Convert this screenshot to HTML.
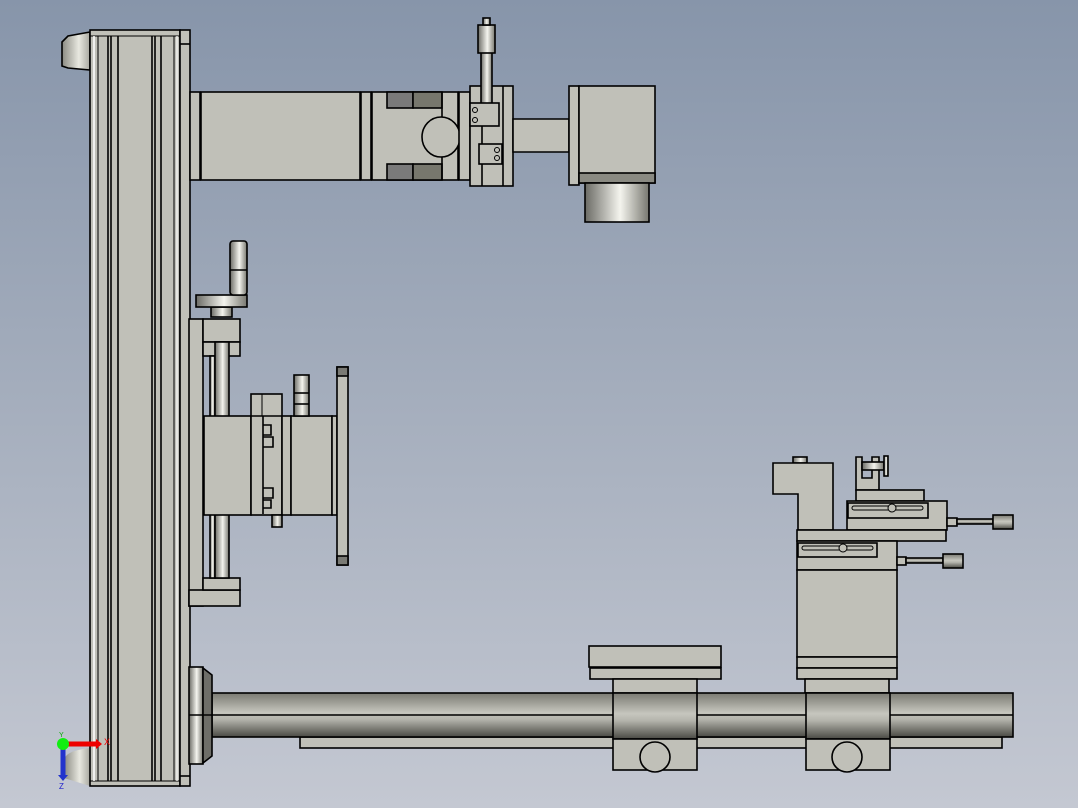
<!DOCTYPE html>
<html><head><meta charset="utf-8"><style>html,body{margin:0;padding:0;overflow:hidden}svg{display:block}</style></head>
<body>
<svg width="1078" height="808" viewBox="0 0 1078 808" xmlns="http://www.w3.org/2000/svg">
<defs>
<linearGradient id="bg" x1="0" y1="0" x2="0" y2="1"><stop offset="0" stop-color="#8795aa"/><stop offset="0.5" stop-color="#a5aebd"/><stop offset="1" stop-color="#c4c8d2"/></linearGradient>
<linearGradient id="cylV" x1="0" y1="0" x2="0" y2="1"><stop offset="0" stop-color="#7a7a72"/><stop offset="0.45" stop-color="#c6c6be"/><stop offset="0.6" stop-color="#b4b4ac"/><stop offset="1" stop-color="#4a4a44"/></linearGradient>
<linearGradient id="cylH" x1="0" y1="0" x2="1" y2="0"><stop offset="0" stop-color="#6a6a64"/><stop offset="0.55" stop-color="#f4f4ee"/><stop offset="1" stop-color="#77776f"/></linearGradient>
<linearGradient id="coneG" x1="0" y1="0" x2="1" y2="0"><stop offset="0" stop-color="#8a8a82"/><stop offset="0.6" stop-color="#e8e8e0"/><stop offset="1" stop-color="#a8a8a0"/></linearGradient>
</defs>
<rect width="1078" height="808" fill="url(#bg)"/>
<g stroke="#000" stroke-width="1.6" fill="#c0c0b8">
<polygon points="90,32 68,36 62,42 62,66 68,68 90,70" fill="url(#coneG)"/>
<path d="M90,748 C76,750 66,752 64,760 L64,778 L90,786 Z" fill="url(#coneG)" stroke="none"/>
<rect x="90" y="30" width="90" height="756"/>
<rect x="180" y="30" width="10" height="756"/>
<line x1="180" y1="44" x2="190" y2="44"/><line x1="180" y1="776" x2="190" y2="776"/>
<line x1="90" y1="36" x2="180" y2="36" stroke-width="1"/><line x1="90" y1="781" x2="180" y2="781" stroke-width="1"/>
<line x1="94" y1="36" x2="94" y2="781" stroke="#fff" stroke-width="1.5"/>
<line x1="98" y1="36" x2="98" y2="781" stroke-width="1"/>
<line x1="108" y1="36" x2="108" y2="781"/><line x1="111" y1="36" x2="111" y2="781"/><line x1="118" y1="36" x2="118" y2="781"/>
<line x1="152" y1="36" x2="152" y2="781"/><line x1="155" y1="36" x2="155" y2="781"/><line x1="161" y1="36" x2="161" y2="781"/>
<line x1="174" y1="36" x2="174" y2="781" stroke-width="1"/><line x1="177" y1="36" x2="177" y2="781" stroke="#fff" stroke-width="1.2"/>
<rect x="190" y="92" width="10" height="88"/>
<rect x="201" y="92" width="159" height="88"/>
<rect x="361" y="92" width="10" height="88"/>
<rect x="372" y="92" width="86" height="88"/>
<rect x="387" y="92" width="26" height="16" fill="#7a7a7a"/><rect x="413" y="92" width="29" height="16" fill="#77776d"/>
<rect x="387" y="164" width="26" height="16" fill="#7a7a7a"/><rect x="413" y="164" width="29" height="16" fill="#77776d"/>
<line x1="442" y1="92" x2="442" y2="180"/>
<ellipse cx="441" cy="137" rx="19" ry="20"/>
<rect x="459" y="92" width="11" height="88"/>
<rect x="470" y="86" width="43" height="100"/>
<line x1="482" y1="86" x2="482" y2="186"/><line x1="503" y1="86" x2="503" y2="186"/>
<polygon points="513,119 569,119 569,152 513,152"/>
<rect x="569" y="86" width="10" height="99"/>
<rect x="579" y="86" width="76" height="97"/>
<rect x="579" y="173" width="76" height="10" fill="#8a8a82"/>
<rect x="585" y="183" width="64" height="39" fill="url(#cylH)"/>
<rect x="481" y="40" width="11" height="80" fill="url(#cylH)"/>
<rect x="478" y="25" width="17" height="28" fill="url(#cylH)"/>
<rect x="483" y="18" width="7" height="7" fill="url(#cylH)"/>
<rect x="470" y="103" width="29" height="23"/>
<circle cx="475" cy="110" r="2.5" stroke-width="1"/><circle cx="475" cy="120" r="2.5" stroke-width="1"/>
<rect x="479" y="144" width="23" height="20"/>
<circle cx="497" cy="150" r="2.5" stroke-width="1"/><circle cx="497" cy="158" r="2.5" stroke-width="1"/>
<rect x="189" y="319" width="14" height="287"/>
<rect x="203" y="319" width="37" height="23"/><rect x="203" y="342" width="37" height="14"/>
<rect x="189" y="590" width="51" height="16"/><rect x="203" y="578" width="37" height="12"/>
<rect x="210" y="356" width="5" height="222" fill="url(#cylH)"/>
<rect x="215" y="342" width="14" height="236" fill="url(#cylH)"/>
<rect x="211" y="307" width="21" height="10" fill="url(#cylH)"/>
<rect x="196" y="295" width="51" height="12" fill="url(#cylH)"/>
<rect x="230" y="241" width="17" height="54" rx="3" fill="url(#cylH)"/>
<line x1="230" y1="270" x2="247" y2="270"/>
<rect x="204" y="416" width="47" height="99"/>
<rect x="251" y="394" width="31" height="121"/>
<line x1="251" y1="416" x2="282" y2="416"/><line x1="262" y1="394" x2="262" y2="416" stroke-width="1"/>
<path d="M263,416 V514 M263,425 h8 v10 h-8 M263,437 h10 v10 h-10 M263,488 h10 v10 h-10 M263,500 h8 v8 h-8" fill="none"/>
<rect x="282" y="416" width="9" height="99"/>
<rect x="291" y="416" width="41" height="99"/>
<rect x="332" y="416" width="5" height="99"/>
<rect x="337" y="367" width="11" height="198"/>
<rect x="337" y="367" width="11" height="9" fill="#7a7a74"/><rect x="337" y="556" width="11" height="9" fill="#7a7a74"/>
<rect x="294" y="375" width="15" height="41" fill="url(#cylH)"/>
<line x1="294" y1="393" x2="309" y2="393"/><line x1="294" y1="404" x2="309" y2="404"/>
<rect x="272" y="515" width="10" height="12" fill="url(#cylH)"/>
<rect x="793" y="457" width="14" height="6" fill="url(#cylH)"/>
<polygon points="773,463 833,463 833,530 798,530 798,494 773,494"/>
<path d="M856,490 V457 H862 V478 H872 V457 H879 V490 Z"/>
<rect x="862" y="462" width="22" height="8" fill="url(#cylH)"/>
<rect x="884" y="456" width="4" height="20" fill="url(#cylH)"/>
<rect x="856" y="490" width="68" height="11"/>
<rect x="847" y="501" width="100" height="29"/>
<rect x="848" y="503" width="80" height="15"/>
<rect x="852" y="506" width="71" height="4" rx="2" stroke-width="1"/>
<circle cx="892" cy="508" r="4" stroke-width="1"/>
<rect x="947" y="518" width="10" height="8"/><rect x="957" y="519" width="36" height="5" fill="url(#cylV)"/>
<rect x="993" y="515" width="20" height="14" fill="url(#cylV)"/>
<rect x="797" y="530" width="149" height="11"/>
<rect x="797" y="541" width="100" height="29"/>
<rect x="798" y="543" width="79" height="14"/>
<rect x="802" y="546" width="71" height="4" rx="2" stroke-width="1"/>
<circle cx="843" cy="548" r="4" stroke-width="1"/>
<rect x="897" y="557" width="9" height="8"/><rect x="906" y="558" width="37" height="5" fill="url(#cylV)"/>
<rect x="943" y="554" width="20" height="14" fill="url(#cylV)"/>
<rect x="797" y="570" width="100" height="87"/>
<rect x="797" y="657" width="100" height="11"/><rect x="797" y="668" width="100" height="11"/>
<rect x="805" y="679" width="84" height="14"/>
<rect x="300" y="737" width="702" height="11"/>
<rect x="212" y="693" width="801" height="44" fill="url(#cylV)"/>
<line x1="212" y1="715" x2="1013" y2="715"/>
<rect x="189" y="667" width="14" height="97" fill="url(#cylH)"/>
<polygon points="203,668 212,675 212,756 203,763" fill="#6e6e68"/>
<line x1="189" y1="715" x2="212" y2="715"/>
<rect x="589" y="646" width="132" height="21"/>
<rect x="590" y="668" width="131" height="11"/>
<rect x="613" y="679" width="84" height="14"/>
<rect x="613" y="693" width="84" height="46" fill="url(#cylV)"/>
<rect x="613" y="739" width="84" height="31"/>
<circle cx="655" cy="757" r="15"/>
<rect x="806" y="693" width="84" height="46" fill="url(#cylV)"/>
<rect x="806" y="739" width="84" height="31"/>
<circle cx="847" cy="757" r="15"/>
</g>
<line x1="63" y1="744" x2="96" y2="744" stroke="#e00" stroke-width="5"/>
<polygon points="96,739 102,744 96,749" fill="#e00"/>
<line x1="63" y1="744" x2="63" y2="775" stroke="#2233cc" stroke-width="5"/>
<polygon points="58,775 63,781 68,775" fill="#2233cc"/>
<circle cx="63" cy="744" r="6" fill="#11ee11"/>
<text x="104" y="745" font-family="Liberation Sans, sans-serif" font-size="9" fill="#e00">X</text>
<text x="59" y="737" font-family="Liberation Sans, sans-serif" font-size="7" fill="#0a0">Y</text>
<text x="59" y="789" font-family="Liberation Sans, sans-serif" font-size="8" fill="#22c">Z</text>
</svg>
</body></html>
